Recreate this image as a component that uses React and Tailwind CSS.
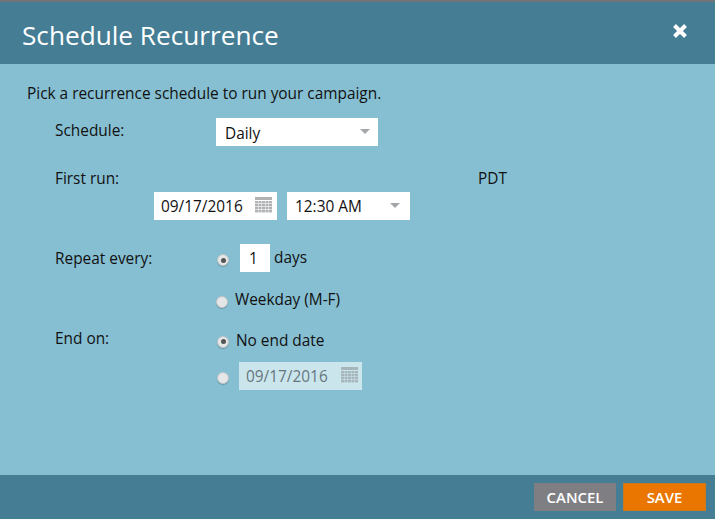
const font = { fontFamily: '"Open Sans", sans-serif' };

function Caret() {
  return (
    <svg width="10" height="5" viewBox="0 0 10 5" className="block">
      <path d="M0 0H10L5 5Z" fill="#a3a7aa" />
    </svg>
  );
}

function Calendar({ color = '#b0b2b3' }) {
  return (
    <svg width="17" height="16" viewBox="0 0 17 16" className="block">
      <rect x="0" y="0" width="17" height="3" fill={color} />
      {[4, 7, 10, 13].map((y) =>
        [0, 3.5, 7, 10.5, 14].map((x) => (
          <rect key={`${x}-${y}`} x={x} y={y} width="3" height="2.4" fill={color} />
        ))
      )}
    </svg>
  );
}

function Radio({ checked, className = '' }) {
  return (
    <span
      className={`flex h-[12px] w-[12px] shrink-0 items-center justify-center rounded-full border border-[#c2c6c8] bg-[#e4e6e7] shadow-[0_1px_1px_rgba(0,0,0,0.2)] ${className}`}
    >
      {checked && <span className="h-[5px] w-[5px] rounded-full bg-[#555]" />}
    </span>
  );
}

export default function App() {
  return (
    <div style={font} className="flex h-[519px] w-[715px] flex-col overflow-hidden bg-[#86bfd2] text-[15.4px] leading-[20px] text-[#111]">
      <div className="h-[2px] bg-[#6f7479]" />
      <header className="flex h-[62px] items-center justify-between bg-[#457d94] pl-[22px] pr-[26px]">
        <h1 className="pt-[4px] text-[26.2px] font-medium leading-[62px] text-white">Schedule Recurrence</h1>
        <svg width="18" height="18" viewBox="0 0 18 18" className="mb-[4px]">
          <path d="M3.5 3.5L14.5 14.5M14.5 3.5L3.5 14.5" stroke="#fff" strokeWidth="4" />
        </svg>
      </header>

      <main className="flex-1 pl-[27px] pt-[20px]">
        <p>Pick a recurrence schedule to run your campaign.</p>

        <div className="mt-[14px] flex pl-[28px]">
          <div className="w-[161px] pt-[3px]">Schedule:</div>
          <div className="flex h-[28px] w-[162px] items-center justify-between bg-white pl-[9px] pr-[8px]">
            <span className="pt-[4px]">Daily</span>
            <span className="mb-[2px]"><Caret /></span>
          </div>
        </div>

        <div className="mt-[23px] flex justify-between pl-[28px] pr-[208px]">
          <div>First run:</div>
          <div>PDT</div>
        </div>

        <div className="mt-[3px] flex gap-[10px] pl-[127px]">
          <div className="flex h-[28px] w-[123px] items-center justify-between bg-white pl-[7px] pr-[5px]">
            <span className="pt-[2px]">09/17/2016</span>
            <span className="mb-[3px]"><Calendar /></span>
          </div>
          <div className="flex h-[28px] w-[123px] items-center justify-between bg-white pl-[8px] pr-[10px]">
            <span className="pt-[2px]">12:30 AM</span>
            <span className="mb-[2px]"><Caret /></span>
          </div>
        </div>

        <div className="mt-[24px] flex pl-[28px]">
          <div className="w-[161px] pt-[5px]">Repeat every:</div>
          <div className="flex items-center">
            <Radio checked className="ml-[1px] mt-[4px]" />
            <div className="ml-[11px] flex h-[28px] w-[30px] items-center justify-center bg-white pr-[3px] pt-[2px]">1</div>
            <span className="ml-[4px]">days</span>
          </div>
        </div>

        <div className="mt-[18px] flex items-center pl-[189px]">
          <Radio className="mt-[4px]" />
          <span className="ml-[7px]">Weekday (M-F)</span>
        </div>

        <div className="mt-[18px] flex pl-[28px]">
          <div className="w-[161px] pt-[1px]">End on:</div>
          <div className="flex items-center pt-[3px]">
            <Radio checked className="ml-[1px] mt-[1px]" />
            <span className="ml-[7px]">No end date</span>
          </div>
        </div>

        <div className="mt-[11px] flex items-center pl-[190px]">
          <Radio className="mt-[4px]" />
          <div className="ml-[10px] flex h-[28px] w-[123px] items-center justify-between bg-[#cbe5ed] pl-[7px] pr-[4px] text-[#66767d]">
            <span className="pt-[1px]">09/17/2016</span>
            <span className="mb-[3px]"><Calendar color="#a6b6bb" /></span>
          </div>
        </div>
      </main>

      <footer className="flex h-[44px] items-start justify-end gap-[7px] bg-[#457d94] pr-[9px] pt-[8px]">
        <button className="h-[28px] w-[82px] bg-[#7f7f83] text-[14.9px] font-semibold text-white">CANCEL</button>
        <button className="h-[28px] w-[83px] border border-[#c77a20] bg-[#ea7600] text-[14.9px] font-semibold text-white">SAVE</button>
      </footer>
    </div>
  );
}
